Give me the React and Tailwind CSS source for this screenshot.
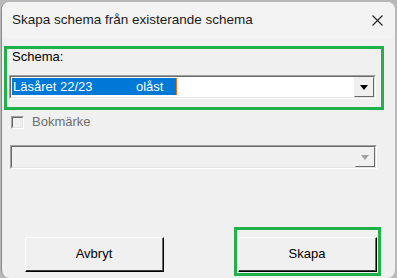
import React from 'react';

const font = { fontFamily: '"Liberation Sans", Arial, sans-serif' };

const DropButton = ({ disabled }) => (
    <div className="w-[20px] h-full bg-[#f0f0f0] border-t border-l border-[#f0f0f0] border-b border-r border-b-[#696969] border-r-[#696969] flex items-center justify-center">
        <svg width="8" height="5" viewBox="0 0 8 5">
            <path d="M0 0 H8 L4 5 Z" fill={disabled ? '#a0a0a0' : '#000'} />
        </svg>
    </div>
);

const Combo = ({ disabled, children }) => (
    <div className="w-[367px] h-[24px] border border-t-[#a0a0a0] border-l-[#a0a0a0] border-b-white border-r-white">
        <div className={`w-full h-full flex border border-t-[#696969] border-l-[#696969] border-b-[#e3e3e3] border-r-[#e3e3e3] ${disabled ? 'bg-[#f0f0f0]' : 'bg-white'}`}>
            <div className="flex-1 pl-[1px] pt-[1px]">{children}</div>
            <DropButton disabled={disabled} />
        </div>
    </div>
);

const WinButton = ({ label }) => (
    <div className="w-[139px] h-[35px] border border-t-white border-l-white border-b-black border-r-black">
        <div className="w-full h-full flex items-center justify-center border-b border-r border-b-[#3a3a3a] border-r-[#6a6a6a] bg-[#f0f0f0] text-[13px] text-black">
            {label}
        </div>
    </div>
);

export default function App() {
    return (
        <div className="w-[397px] h-[278px] bg-[#b8b8b8] pt-[2px] pl-[1px] overflow-hidden" style={font}>
            <div className="w-[394px] h-[276px] bg-[#f0f0f0] rounded-[8px] border-l border-[#8a8a8a] flex flex-col overflow-hidden">
                <div className="h-[36px] bg-[#f3f3f3] flex items-center justify-between pl-[10px] pr-[12px]">
                    <span className="text-[13.5px] text-[#1a1a1a]">Skapa schema från existerande schema</span>
                    <svg width="11" height="11" viewBox="0 0 11 11">
                        <path d="M0.5 0.5 L10.5 10.5 M10.5 0.5 L0.5 10.5" stroke="#222" strokeWidth="1.1" />
                    </svg>
                </div>

                <div className="mt-[8px] ml-[2px] w-[380px] h-[64px] border-[3px] border-[#1fb24a]">
                    <div className="pl-[5px] text-[13px] leading-[15px] text-black">Schema:</div>
                    <div className="ml-[2px] mt-[11px]">
                        <Combo>
                            <div className="flex h-[17px]">
                                <div className="w-[164px] h-[17px] bg-[#0078d7] text-white text-[13px] leading-[17px] pl-[1px] flex">
                                    <span className="w-[123px]">Läsåret 22/23</span>
                                    <span>olåst</span>
                                </div>
                                <div className="w-[1px] h-[17px] bg-[#e8701c]" />
                            </div>
                        </Combo>
                    </div>
                </div>

                <div className="mt-[4px] ml-[9px] flex items-center h-[16px]">
                    <div className="w-[13px] h-[13px] border border-t-[#a0a0a0] border-l-[#a0a0a0] border-b-white border-r-white">
                        <div className="w-full h-full border border-t-[#696969] border-l-[#696969] border-b-[#e3e3e3] border-r-[#e3e3e3] bg-[#f0f0f0]" />
                    </div>
                    <span className="ml-[8px] text-[13px] text-[#6d6d6d]">Bokmärke</span>
                </div>

                <div className="mt-[15px] ml-[8px]">
                    <Combo disabled />
                </div>

                <div className="mt-auto mb-[2px] flex items-end">
                    <div className="ml-[23px] mb-[4px]">
                        <WinButton label="Avbryt" />
                    </div>
                    <div className="ml-[70px] w-[147px] h-[49px] border-[3px] border-[#1fb24a] pl-[1px] pt-[7px]">
                        <WinButton label="Skapa" />
                    </div>
                </div>
            </div>
        </div>
    );
}
